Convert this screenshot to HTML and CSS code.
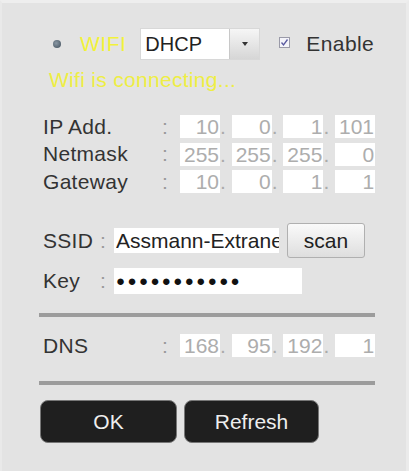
FILE: index.html
```html
<!DOCTYPE html>
<html lang="en">
<head>
	<meta charset="UTF-8">
	<title>WIFI</title>
	<link rel="stylesheet" href="styles.css">
</head>
<body>
	<div class="panel">
		<div class="top">
			<span class="radio"></span>
			<span class="wifi">WIFI</span>
			<div class="select">
				<span class="select-val">DHCP</span>
				<span class="select-btn"><i></i></span>
			</div>
			<span class="check">
				<svg width="11" height="11" viewBox="0 0 11 11"><rect x="0.5" y="0.5" width="10" height="10" fill="#f4f4fa" stroke="#9a9aa8"/><path d="M2.5 5.5 L4.5 8 L8.5 2.5" fill="none" stroke="#5a5aa0" stroke-width="1.3"/></svg>
			</span>
			<span class="enable">Enable</span>
		</div>
		<div class="status">Wifi is connecting...</div>

		<div class="ip-row first">
			<span class="label">IP Add.</span><span class="colon">:</span>
			<span class="box">10</span><span class="dot">.</span>
			<span class="box">0</span><span class="dot">.</span>
			<span class="box">1</span><span class="dot">.</span>
			<span class="box">101</span>
		</div>
		<div class="ip-row">
			<span class="label">Netmask</span><span class="colon">:</span>
			<span class="box">255</span><span class="dot">.</span>
			<span class="box">255</span><span class="dot">.</span>
			<span class="box">255</span><span class="dot">.</span>
			<span class="box">0</span>
		</div>
		<div class="ip-row">
			<span class="label">Gateway</span><span class="colon">:</span>
			<span class="box">10</span><span class="dot">.</span>
			<span class="box">0</span><span class="dot">.</span>
			<span class="box">1</span><span class="dot">.</span>
			<span class="box">1</span>
		</div>

		<div class="ssid-row">
			<span class="label-s">SSID</span><span class="colon-s">:</span>
			<input class="input ssid" type="text" value="Assmann-Extranet" readonly>
			<span class="scan">scan</span>
		</div>
		<div class="key-row">
			<span class="label-s">Key</span><span class="colon-s">:</span>
			<span class="input key">●●●●●●●●●●●</span>
		</div>

		<div class="sep"></div>

		<div class="ip-row dns">
			<span class="label">DNS</span><span class="colon">:</span>
			<span class="box">168</span><span class="dot">.</span>
			<span class="box">95</span><span class="dot">.</span>
			<span class="box">192</span><span class="dot">.</span>
			<span class="box">1</span>
		</div>

		<div class="sep sep2"></div>

		<div class="btns">
			<span class="btn ok">OK</span>
			<span class="btn refresh">Refresh</span>
		</div>
	</div>
</body>
</html>
```

FILE: styles.css
```css
* {
	margin: 0;
	padding: 0;
	box-sizing: border-box;
}
html, body {
	height: 100%;
}
body {
	background-color: #e3e3e3;
	font-family: "Liberation Sans", Arial, sans-serif;
	font-size: 21px;
	color: #333;
}

.panel {
	height: 471px;
	padding: 25px 0 0 41px;
	border-top: 3px solid #eeeeee;
	border-left: 2px solid #e9e9e9;
	border-right: 3px solid #ebebeb;
}

/* top line */
.top {
	display: flex;
	align-items: center;
	height: 32px;
	padding-left: 10px;
}
.radio {
	width: 8px;
	height: 8px;
	border-radius: 50%;
	background: radial-gradient(circle at 40% 40%, #8a98a4, #3f4d5a);
	margin-right: 19px;
}
.wifi {
	color: #f2f23a;
	font-size: 21px;
	letter-spacing: 0.5px;
	margin-right: 14px;
}
.select {
	display: flex;
	width: 120px;
	height: 32px;
	background: #fff;
	border: 1px solid #d8d8d8;
}
.select-val {
	flex: 1;
	font-size: 20px;
	color: #222;
	line-height: 30px;
	padding-left: 4px;
}
.select-btn {
	width: 30px;
	border-left: 1px solid #c8c8c8;
	background: linear-gradient(#f6f6f6, #d6d6d6);
	display: flex;
	align-items: center;
	justify-content: center;
}
.select-btn i {
	width: 0;
	height: 0;
	border-left: 3px solid transparent;
	border-right: 3px solid transparent;
	border-top: 4px solid #333;
}
.check {
	display: flex;
	margin-left: 19px;
	margin-right: 16px;
	margin-top: -3px;
}
.enable {
	color: #333;
	letter-spacing: 0.4px;
}

.status {
	color: #eeee44;
	line-height: 24px;
	margin-top: 8px;
	padding-left: 6px;
	letter-spacing: 0.3px;
}

/* address rows */
.ip-row {
	display: flex;
	align-items: center;
	height: 23px;
	margin-top: 4.5px;
}
.ip-row.first {
	margin-top: 23px;
}
.label {
	width: 119px;
	letter-spacing: 0.3px;
}
.colon {
	width: 18px;
	color: #999;
}
.box {
	width: 40px;
	height: 23px;
	line-height: 23px;
	background: #fff;
	color: #adadad;
	text-align: right;
	padding-right: 1px;
}
.dot {
	width: 11.7px;
	color: #aaa;
	line-height: 23px;
}

/* ssid / key */
.ssid-row {
	display: flex;
	align-items: center;
	height: 35px;
	margin-top: 30px;
}
.key-row {
	display: flex;
	align-items: center;
	height: 26px;
	margin-top: 10px;
}
.label-s {
	width: 57px;
	letter-spacing: 0.3px;
}
.colon-s {
	width: 14px;
	color: #999;
}
.input {
	background: #fff;
	white-space: nowrap;
	overflow: hidden;
	color: #222;
	border: none;
	outline: none;
	font-family: inherit;
}
.ssid {
	width: 165px;
	height: 25px;
	line-height: 25px;
	font-size: 21px;
	padding-left: 2px;
}
.key {
	width: 188px;
	height: 26px;
	line-height: 26px;
	font-size: 15px;
	letter-spacing: 2.4px;
	padding-left: 2px;
	color: #111;
}
.scan {
	margin-left: 8px;
	width: 78px;
	height: 35px;
	line-height: 33px;
	text-align: center;
	border: 1px solid #b0b0b0;
	border-radius: 3px;
	background: linear-gradient(#fafafa, #dedede);
	color: #222;
}

.sep {
	width: 336px;
	height: 4px;
	margin-left: -4px;
	margin-top: 19px;
	background: #9c9c9c;
}
.ip-row.dns {
	margin-top: 17px;
}
.sep2 {
	margin-top: 24px;
}

/* buttons */
.btns {
	display: flex;
	gap: 7px;
	margin-top: 15px;
	margin-left: -3px;
}
.btn {
	height: 43px;
	line-height: 41px;
	text-align: center;
	background: #1f1f1f;
	border: 1px solid #777;
	border-radius: 8px;
	color: #eee;
	font-size: 21px;
}
.ok {
	width: 137px;
}
.refresh {
	width: 135px;
}
```
